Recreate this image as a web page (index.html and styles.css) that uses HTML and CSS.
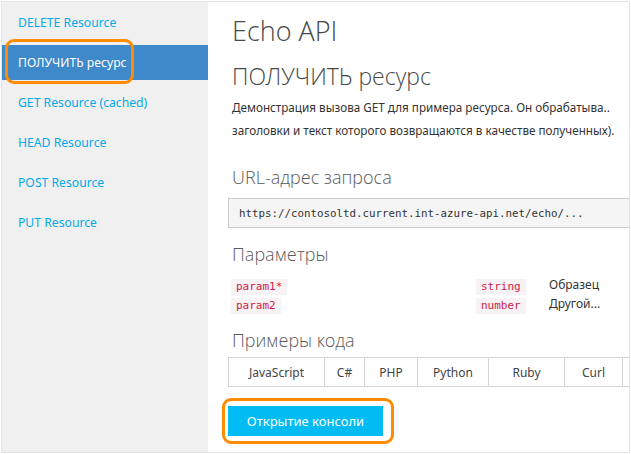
FILE: index.html
```html
<!DOCTYPE html>
<html lang="ru">
<head>
<meta charset="utf-8">
<title>Echo API</title>
<link rel="stylesheet" href="styles.css">
</head>
<body>
<div class="frame">
  <nav class="sidebar">
    <ul class="nav">
      <li class="nav-item"><a>DELETE Resource</a></li>
      <li class="nav-item active"><a>ПОЛУЧИТЬ ресурс</a></li>
      <li class="nav-item"><a>GET Resource (cached)</a></li>
      <li class="nav-item"><a>HEAD Resource</a></li>
      <li class="nav-item"><a>POST Resource</a></li>
      <li class="nav-item"><a>PUT Resource</a></li>
    </ul>
  </nav>
  <main class="content">
    <h1 class="title">Echo API</h1>
    <h2 class="subtitle">ПОЛУЧИТЬ ресурс</h2>
    <p class="desc">Демонстрация вызова GET для примера ресурса. Он обрабатыва..<br>заголовки и текст которого возвращаются в качестве полученных).</p>
    <h3 class="section section-url">URL-адрес запроса</h3>
    <div class="url">https://contosoltd.current.int-azure-api.net/echo/...</div>
    <h3 class="section section-params">Параметры</h3>
    <div class="params">
      <div class="param-name"><code class="badge">param1*</code></div>
      <div class="param-type"><code class="badge">string</code></div>
      <div class="param-desc">Образец</div>
      <div class="param-name"><code class="badge">param2</code></div>
      <div class="param-type"><code class="badge">number</code></div>
      <div class="param-desc">Другой...</div>
    </div>
    <h3 class="section section-code">Примеры кода</h3>
    <div class="tabs">
      <div class="tab tab-js">JavaScript</div>
      <div class="tab tab-cs">C#</div>
      <div class="tab tab-php">PHP</div>
      <div class="tab tab-py">Python</div>
      <div class="tab tab-rb">Ruby</div>
      <div class="tab tab-curl">Curl</div>
      <div class="tab tab-more"></div>
    </div>
    <div class="console-wrap">
      <button class="console">Открытие консоли</button>
    </div>
  </main>
</div>
</body>
</html>
```
FILE: styles.css
```css
html, body {
  margin: 0;
  padding: 0;
  background: #ffffff;
}
body {
  font-family: "Noto Sans", "Open Sans", sans-serif;
}
.frame {
  display: flex;
  box-sizing: border-box;
  width: 629px;
  height: 452px;
  margin: 1px 0 0 1px;
  border: 1px solid #e4e4e4;
  overflow: hidden;
}
.sidebar {
  width: 206px;
  flex: 0 0 206px;
  background: #f0f0f0;
}
.nav {
  list-style: none;
  margin: 0;
  padding: 3px 0 0 0;
  display: flex;
  flex-direction: column;
  gap: 5px;
}
.nav-item {
  position: relative;
  height: 35px;
  display: flex;
  align-items: center;
  padding-left: 16px;
  font-size: 12.2px;
  color: #00a9ea;
}
.nav-item.active {
  background: #3e89c9;
  color: #ffffff;
}
.nav-item.active::after {
  content: "";
  position: absolute;
  left: 3px;
  top: -6px;
  width: 129px;
  height: 45px;
  box-sizing: border-box;
  border: 3px solid #ff8c00;
  border-radius: 9px;
}
.content {
  flex: 1;
  min-width: 0;
  overflow: hidden;
  background: #ffffff;
  padding-left: 20px;
}
.title,
.subtitle,
.section {
  font-family: "Open Sans Light", "Lato", sans-serif;
  font-weight: 300;
}
.title {
  margin: 12px 0 0 4px;
  font-size: 27px;
  line-height: 34px;
  color: #484848;
}
.subtitle {
  margin: 14px 0 0 4px;
  font-size: 23px;
  line-height: 28px;
  color: #484848;
}
.desc {
  margin: 6px 0 0 4px;
  font-size: 11.7px;
  line-height: 23px;
  color: #333333;
  white-space: nowrap;
}
.section {
  margin: 16px 0 0 4px;
  font-size: 18px;
  line-height: 24px;
  color: #5a5a5a;
}
.section-url {
  margin-top: 23px;
}
.section-params {
  margin-top: 14px;
}
.section-code {
  margin-top: 14px;
}
.url {
  margin-top: 9px;
  box-sizing: border-box;
  height: 30px;
  width: 430px;
  padding-left: 10px;
  display: flex;
  align-items: center;
  background: #f5f5f5;
  border: 1px solid #cccccc;
  font-family: "DejaVu Sans Mono", monospace;
  font-size: 10.8px;
  color: #333333;
  white-space: nowrap;
}
.params {
  margin: 11px 0 0 3px;
  display: grid;
  grid-template-columns: 245px 73px 1fr;
  row-gap: 1px;
  font-size: 12px;
  color: #333333;
}
.badge {
  display: inline-block;
  padding: 0 5px;
  height: 16px;
  line-height: 16px;
  background: #f7f2f4;
  color: #d11a4b;
  font-family: "DejaVu Sans Mono", monospace;
  font-size: 11px;
}
.param-desc {
  line-height: 16px;
}
.tabs {
  margin-top: 5px;
  display: flex;
  height: 30px;
  width: 460px;
  box-sizing: border-box;
  border-top: 1px solid #d4d4d4;
  border-bottom: 1px solid #d4d4d4;
  border-left: 1px solid #d4d4d4;
}
.tab {
  flex: 0 0 auto;
  box-sizing: border-box;
  display: flex;
  align-items: center;
  justify-content: center;
  border-right: 1px solid #d4d4d4;
  font-size: 12px;
  color: #444444;
  white-space: nowrap;
}
.tab-js { width: 96px; }
.tab-cs { width: 40px; }
.tab-php { width: 53px; }
.tab-py { width: 71px; }
.tab-rb { width: 76px; }
.tab-curl { width: 58px; }
.tab-more { width: 80px; }
.console-wrap {
  position: relative;
  margin-top: 19px;
  width: 155px;
}
.console-wrap::after {
  content: "";
  position: absolute;
  left: -6px;
  top: -8px;
  width: 172px;
  height: 46px;
  box-sizing: border-box;
  border: 3px solid #ff8c00;
  border-radius: 9px;
}
.console {
  display: block;
  width: 155px;
  height: 30px;
  border: none;
  margin: 0;
  padding: 0;
  background: #00bcf2;
  color: #ffffff;
  font-family: "Noto Sans", "Open Sans", sans-serif;
  font-size: 13px;
}
```
